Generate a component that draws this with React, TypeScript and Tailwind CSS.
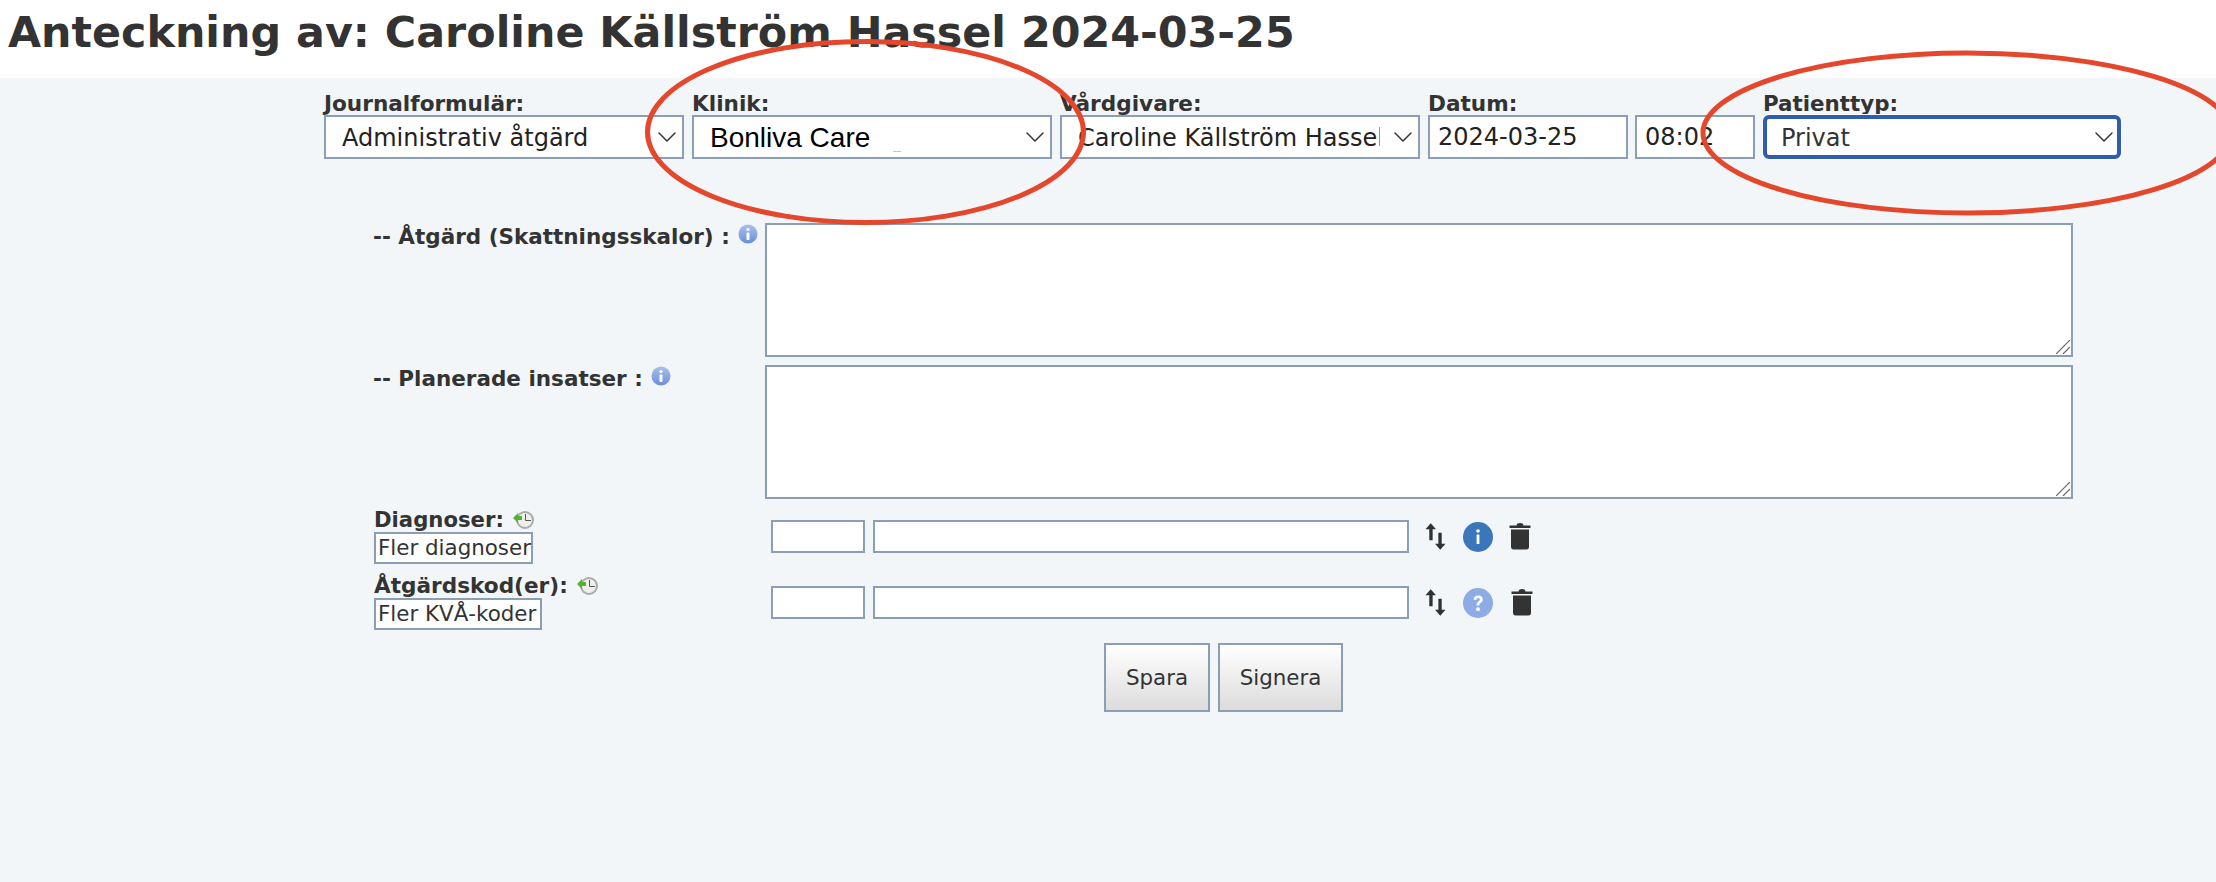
import React from "react";
import { ChevronDown } from "lucide-react";

const font = "font-['DejaVu_Sans',sans-serif]";

const InfoDot = () => (
  <svg width="20" height="22" viewBox="0 0 20 22" className="shrink-0">
    <defs>
      <linearGradient id="infoGrad" x1="0" y1="0" x2="0" y2="1">
        <stop offset="0" stopColor="#a9c0ec" />
        <stop offset="1" stopColor="#6b8fd6" />
      </linearGradient>
    </defs>
    <circle cx="10" cy="10" r="9.5" fill="url(#infoGrad)" />
    <circle cx="10" cy="5.5" r="1.6" fill="#fff" />
    <rect x="8.5" y="8.5" width="3" height="7.5" rx="1" fill="#fff" />
  </svg>
);

const ClockBack = () => (
  <svg width="21" height="20" viewBox="0 0 21 20" className="shrink-0">
    <circle cx="12" cy="10" r="8" fill="#eeeeea" stroke="#a9aca9" strokeWidth="2" />
    <path d="M12.5 4V10.5H18" fill="none" stroke="#555" strokeWidth="1" />
    <path d="M0 8L5 3V6H9V10H5V13Z" fill="#4fb52f" />
  </svg>
);

const SwapArrows = () => (
  <svg width="21" height="27" viewBox="0 0 22 28" className="shrink-0" fill="#2f3133">
    <path d="M6 0L11.5 6.5H8V18H4.5V6.5H0.5Z" />
    <path d="M16 28L10.5 21.5H14V10H17.5V21.5H21.5Z" />
  </svg>
);

const CircleInfo = () => (
  <svg width="30" height="30" viewBox="0 0 30 30" className="shrink-0">
    <circle cx="15" cy="15" r="15" fill="#3b76bb" />
    <circle cx="15" cy="9" r="1.8" fill="#fff" />
    <rect x="13.6" y="12.5" width="2.8" height="9.5" rx="0.6" fill="#fff" />
  </svg>
);

const CircleHelp = () => (
  <svg width="30" height="30" viewBox="0 0 30 30" className="shrink-0">
    <circle cx="15" cy="15" r="15" fill="#8dabe4" />
    <path d="M10.5 11.5C10.8 8.8 12.8 7.5 15.2 7.5C17.8 7.5 19.8 9.1 19.8 11.4C19.8 14.6 16.3 14.6 16.3 17.5H13.6C13.6 13.4 16.8 13.4 16.8 11.5C16.8 10.6 16.1 10 15.1 10C14 10 13.4 10.7 13.2 11.9Z" fill="#fff" />
    <circle cx="15" cy="21.2" r="1.9" fill="#fff" />
  </svg>
);

const Trash = () => (
  <svg width="22" height="27" viewBox="0 1 22 27" className="shrink-0" fill="#333">
    <path d="M0.5 3.5H7.5C7.8 1.8 9 1 11 1C13 1 14.2 1.8 14.5 3.5H21.5V6H0.5Z" />
    <path d="M2 7.5H20V25C20 26.6 19 27.5 17.5 27.5H4.5C3 27.5 2 26.6 2 25Z" />
  </svg>
);

type SelectProps = {
  label: string;
  value: string;
  pasted?: boolean;
};

const SelectField = ({ label, value, pasted }: SelectProps) => (
  <div className="flex flex-col w-[360px]">
    <label className="h-[24px] pt-[1px] text-[21.6px] leading-[24px] font-bold text-[#333]">{label}</label>
    <div className="relative h-[44px]">
      {pasted ? (
        <select className="h-full w-full appearance-none border-[2px] border-[#8a9fb5] bg-white pl-[16px] pr-[38px] pb-[2px] font-['Liberation_Sans',sans-serif] text-[28px] text-black outline-none rounded-none">
          <option>{value}</option>
        </select>
      ) : (
        <select className="h-full w-full appearance-none border-[2px] border-[#8a9fb5] bg-white pl-[16px] pr-[38px] pt-[2px] text-[24px] text-[#222] outline-none rounded-none">
          <option>{value}</option>
        </select>
      )}
      <ChevronDown className="absolute right-[1px] top-[6px] pointer-events-none text-[#333]" size={32} strokeWidth={1.1} />
      {pasted && <span className="absolute left-[201px] top-[36px] h-[1px] w-[8px] rounded-full bg-[#c4c4c4]" />}
    </div>
  </div>
);

type CodeRowProps = {
  label: string;
  labelClass: string;
  button: string;
  buttonClass: string;
  help?: boolean;
};

const CodeRow = ({ label, labelClass, button, buttonClass, help }: CodeRowProps) => (
  <div className="flex">
    <div className="w-[397px] shrink-0">
      <div className="flex items-center gap-[9px] h-[25px]">
        <span className={`${labelClass} leading-[25px] font-bold text-[#333]`}>{label}</span>
        <ClockBack />
      </div>
      <div className={`${buttonClass} border-[2px] border-[#8a9fb5] bg-white px-[2px] h-[32px] text-[21.4px] leading-[28px] text-[#333] whitespace-nowrap`}>
        {button}
      </div>
    </div>
    <div className="flex items-center gap-[8px] h-[33px] mt-[13px]">
      <input className="w-[94px] h-[33px] border-[2px] border-[#8a9fb5] bg-white outline-none" />
      <input className="w-[536px] h-[33px] border-[2px] border-[#8a9fb5] bg-white outline-none" />
      <div className="flex items-center gap-[17px] ml-[8px]">
        <SwapArrows />
        {help ? <CircleHelp /> : <CircleInfo />}
        <span className={help ? "ml-[1px]" : "ml-[-1px]"}>
          <Trash />
        </span>
      </div>
    </div>
  </div>
);

const NoteRow = ({ label }: { label: string }) => (
  <div className="flex">
    <div className="w-[392px] shrink-0 flex items-start gap-[8px] pt-[1px]">
      <span className="pt-[1px] text-[21.5px] leading-[24px] font-bold text-[#333] whitespace-nowrap">{label}</span>
      <InfoDot />
    </div>
    <div className="relative w-[1308px] h-[134px]">
      <textarea className="block h-full w-full resize-none border-[2px] border-[#8a9fb5] bg-white outline-none" />
      <svg className="absolute right-[3px] bottom-[3px] pointer-events-none" width="14" height="14" viewBox="0 0 14 14" stroke="#666" strokeWidth="1.2">
        <path d="M0 14L14 0" />
        <path d="M7 14L14 7" />
      </svg>
    </div>
  </div>
);

export default function App() {
  return (
    <div className={`relative min-h-[882px] overflow-hidden bg-[#f2f6f9] ${font}`}>
      <h1 className="h-[78px] bg-white pl-[8px] pt-[4px] text-[42.8px] leading-[56px] font-bold text-[#333] whitespace-nowrap">
        Anteckning av: Caroline Källström Hassel 2024-03-25
      </h1>

      <div className="ml-[324px] flex gap-[8px] pt-[13px]">
        <SelectField label="Journalformulär:" value="Administrativ åtgärd" />
        <SelectField label="Klinik:" value="Bonliva Care" pasted />
        <SelectField label="Vårdgivare:" value="Caroline Källström Hassel" />
        <div className="flex flex-col w-[200px]">
          <label className="h-[24px] pt-[1px] text-[21.6px] leading-[24px] font-bold text-[#333]">Datum:</label>
          <input defaultValue="2024-03-25" className="h-[44px] w-full border-[2px] border-[#8a9fb5] bg-white px-[8px] text-[24px] text-[#222] outline-none" />
        </div>
        <div className="flex flex-col w-[120px] ml-[-1px]">
          <div className="h-[24px]" />
          <input defaultValue="08:02" className="h-[44px] w-full border-[2px] border-[#8a9fb5] bg-white px-[8px] text-[24px] text-[#222] outline-none" />
        </div>
        <div className="flex flex-col w-[358px]">
          <label className="h-[24px] pt-[1px] text-[21.4px] leading-[24px] font-bold text-[#333]">Patienttyp:</label>
          <div className="relative h-[44px]">
            <select className="h-full w-full appearance-none rounded-[6px] border-[4px] border-[#2f5db0] bg-white pl-[14px] pr-[30px] pt-[1px] text-[24px] text-[#333] outline-none shadow-[0_0_0_1px_#ffffff]">
              <option>Privat</option>
            </select>
            <ChevronDown className="absolute right-[1px] top-[6px] pointer-events-none text-[#333]" size={32} strokeWidth={1.1} />
          </div>
        </div>
      </div>

      <div className="ml-[373px] mt-[64px] flex flex-col gap-[8px]">
        <NoteRow label="-- Åtgärd (Skattningsskalor) :" />
        <NoteRow label="-- Planerade insatser :" />
      </div>

      <div className="ml-[374px] mt-[8px] flex flex-col gap-[9px]">
        <CodeRow label="Diagnoser:" labelClass="text-[21.2px]" button="Fler diagnoser" buttonClass="w-[159px]" />
        <CodeRow label="Åtgärdskod(er):" labelClass="text-[21.6px]" button="Fler KVÅ-koder" buttonClass="w-[168px]" help />
      </div>

      <div className="ml-[1104px] mt-[13px] flex gap-[8px]">
        <button className="w-[106px] h-[69px] pt-[2px] border-[2px] border-[#8a9fb5] bg-gradient-to-b from-white to-[#dcdcdc] text-[21.4px] text-[#333]">Spara</button>
        <button className="w-[125px] h-[69px] pt-[2px] border-[2px] border-[#8a9fb5] bg-gradient-to-b from-white to-[#dcdcdc] text-[21.4px] text-[#333]">Signera</button>
      </div>

      {/* hand drawn markup on top of the screenshot */}
      <svg className="absolute left-0 top-0 pointer-events-none" width="2216" height="882" fill="none">
        <ellipse cx="865.5" cy="132" rx="218" ry="90.5" stroke="#e4472b" strokeWidth="5" />
        <ellipse cx="1967" cy="133" rx="264" ry="80" stroke="#e4472b" strokeWidth="5" />
      </svg>
    </div>
  );
}
